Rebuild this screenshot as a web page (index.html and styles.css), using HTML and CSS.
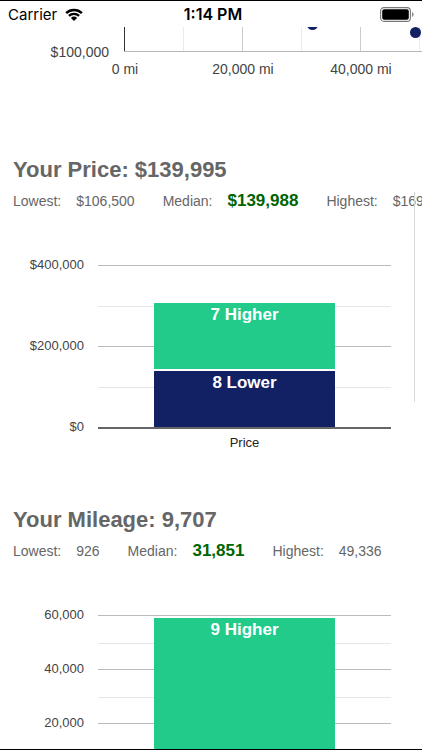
FILE: index.html
```html
<!DOCTYPE html>
<html lang="en">

<head>
    <meta charset="UTF-8">
    <meta name="viewport" content="width=device-width, initial-scale=1.0">
    <title>Price and Mileage</title>
    <link rel="stylesheet" href="styles.css">
</head>

<body>
    <header class="status-bar">
        <div class="carrier">
            <span>Carrier</span>
            <svg class="wifi" width="18" height="13" viewBox="0 0 18 13">
                <path d="M0.3 4.3 A12.6 12.6 0 0 1 17.7 4.3 L16 6 A10 10 0 0 0 2 6 Z" />
                <path d="M3.1 7.1 A8.4 8.4 0 0 1 14.9 7.1 L13.2 8.8 A6 6 0 0 0 4.8 8.8 Z" />
                <path d="M5.9 9.9 A4.4 4.4 0 0 1 12.1 9.9 L9 13 Z" />
            </svg>
        </div>
        <div class="time">1:14 PM</div>
        <div class="battery">
            <svg width="34" height="15" viewBox="0 0 34 15">
                <rect x="0.6" y="0.6" width="29.8" height="13.8" rx="3.4" fill="#fff" stroke="#777" stroke-width="1.1" />
                <rect x="2.2" y="2.2" width="26.6" height="10.6" rx="2" />
                <path d="M32 5 Q33.6 5.8 33.6 7.5 Q33.6 9.2 32 10 Z" fill="#888" />
            </svg>
        </div>
    </header>

    <main class="content">
        <section class="scatter">
            <div class="scatter-label">$100,000</div>
            <div class="scatter-plot">
                <div class="cell axis"></div>
                <div class="cell minor"></div>
                <div class="cell"></div>
                <div class="cell minor"></div>
                <div class="cell"></div>
                <div class="cell minor"></div>
                <span class="dot dot-one"></span>
                <span class="dot dot-two"></span>
            </div>
            <div class="scatter-ticks">
                <span>0 mi</span>
                <span>20,000 mi</span>
                <span>40,000 mi</span>
            </div>
        </section>

        <section class="panel">
            <h2>Your Price: $139,995</h2>
            <dl class="stats">
                <div><dt>Lowest:</dt><dd>$106,500</dd></div>
                <div><dt>Median:</dt><dd class="median">$139,988</dd></div>
                <div><dt>Highest:</dt><dd>$169,995</dd></div>
            </dl>
            <div class="chart price">
                <div class="labels">
                    <span>$400,000</span>
                    <span>$200,000</span>
                    <span>$0</span>
                </div>
                <div class="plot">
                    <div class="lines">
                        <div class="line"></div>
                        <div class="line"></div>
                    </div>
                    <div class="bar">
                        <div class="higher">7 Higher</div>
                        <div class="lower">8 Lower</div>
                    </div>
                </div>
                <div class="axis-title">Price</div>
            </div>
        </section>

        <section class="panel">
            <h2>Your Mileage: 9,707</h2>
            <dl class="stats">
                <div><dt>Lowest:</dt><dd>926</dd></div>
                <div><dt>Median:</dt><dd class="median">31,851</dd></div>
                <div><dt>Highest:</dt><dd>49,336</dd></div>
            </dl>
            <div class="chart mileage">
                <div class="labels">
                    <span>60,000</span>
                    <span>40,000</span>
                    <span>20,000</span>
                </div>
                <div class="plot">
                    <div class="lines">
                        <div class="line"></div>
                        <div class="line"></div>
                        <div class="line"></div>
                    </div>
                    <div class="bar">
                        <div class="higher">9 Higher</div>
                    </div>
                </div>
            </div>
        </section>
    </main>
    <div class="scroll-indicator"></div>
</body>

</html>
```
FILE: styles.css
```css
* {
    box-sizing: border-box;
}

body {
    position: relative;
    display: flex;
    flex-direction: column;
    height: 100vh;
    margin: 0;
    overflow: hidden;
    background-color: white;
    color: #666;
    font-family: "Liberation Sans", Arial, sans-serif;
    border-top: 1px solid black;
    border-bottom: 1px solid black;
}

/* status bar */
.status-bar {
    display: grid;
    grid-template-columns: 1fr auto 1fr;
    align-items: center;
    flex: none;
    height: 26px;
    padding: 0 8px;
    color: black;
    font-family: Inter, "Liberation Sans", sans-serif;
    font-size: 15px;
}

.carrier {
    display: flex;
    align-items: center;
    gap: 8px;
}

.time {
    padding-left: 4px;
    font-size: 16px;
    font-weight: 600;
}

.battery {
    display: flex;
    justify-content: flex-end;
}

.content {
    flex: 1;
    min-height: 0;
    overflow: hidden;
}

/* scatter chart, scrolled mostly out of view */
.scatter {
    display: grid;
    grid-template-columns: 109px 1fr;
    column-gap: 15px;
    height: 129px;
    grid-template-rows: 25px 1fr;
    color: #444;
    font-size: 14px;
}

.scatter-label {
    height: 34px;
    padding-top: 17px;
    line-height: 17px;
    text-align: right;
}

.scatter-plot {
    position: relative;
    display: grid;
    grid-template-columns: repeat(6, 59px);
    overflow: hidden;
    border-bottom: 1px solid #b7b7b7;
}

.cell {
    border-left: 1px solid #ccc;
}

.cell.minor {
    border-left-color: #ebebeb;
}

.cell.axis {
    border-left: 1px solid #333;
}

.dot {
    position: absolute;
    width: 11px;
    height: 11px;
    border-radius: 50%;
    background-color: #122064;
}

.dot-one {
    left: 183px;
    top: -8px;
}

.dot-two {
    left: 286px;
    top: 0;
}

.scatter-ticks {
    grid-column: 2;
    display: grid;
    grid-template-columns: repeat(3, 118px);
    margin-left: -58px;
    padding-top: 9px;
    line-height: 17px;
    text-align: center;
}

/* panels */
.panel {
    height: 350px;
}

h2 {
    margin: 0 13px;
    font-size: 22px;
    line-height: 28px;
}

.stats {
    display: flex;
    gap: 28px;
    margin: 6px 13px 0;
    font-size: 14px;
    line-height: 22px;
    white-space: nowrap;
}

.stats div {
    display: flex;
    flex: none;
    gap: 15px;
}

.stats dd {
    margin: 0;
}

.stats .median {
    color: #006400;
    font-size: 17px;
    font-weight: bold;
}

.chart {
    display: grid;
    grid-template-columns: 84px 1fr;
    column-gap: 14px;
    margin: 53px 31px 0 0;
    color: #444;
    font-size: 13px;
}

.labels {
    display: flex;
    flex-direction: column;
    margin: -9px 0;
    line-height: 18px;
    text-align: right;
}

.plot {
    display: grid;
}

.lines,
.bar {
    grid-area: 1 / 1;
}

.lines {
    align-self: start;
    border-bottom: 2px solid #666;
}

.line {
    height: 81px;
    border-top: 1px solid #bbb;
}

.line::after {
    content: "";
    display: block;
    height: 50%;
    border-bottom: 1px solid #e6e6e6;
}

.bar {
    display: flex;
    flex-direction: column;
    gap: 2px;
    align-self: start;
    justify-self: center;
    width: 62%;
    background-color: white;
    color: white;
    font-size: 17px;
    font-weight: bold;
    line-height: 24px;
    text-align: center;
}

.higher {
    background-color: #23cb8a;
}

.lower {
    background-color: #122064;
}

.axis-title {
    grid-column: 2;
    color: #222;
    line-height: 16px;
    text-align: center;
    padding-top: 6px;
}

.price .labels {
    height: 180px;
    justify-content: space-between;
}

.price .bar {
    margin-top: 38px;
}

.price .higher {
    height: 66px;
}

.price .lower {
    height: 56px;
}

.mileage .labels {
    gap: 36px;
}

.mileage .line {
    height: 54px;
}

.mileage .bar {
    margin-top: 3px;
}

.mileage .higher {
    height: 159px;
}

.scroll-indicator {
    position: absolute;
    top: 191px;
    right: 7px;
    width: 1px;
    height: 210px;
    background-color: #d9d9d9;
}
```
